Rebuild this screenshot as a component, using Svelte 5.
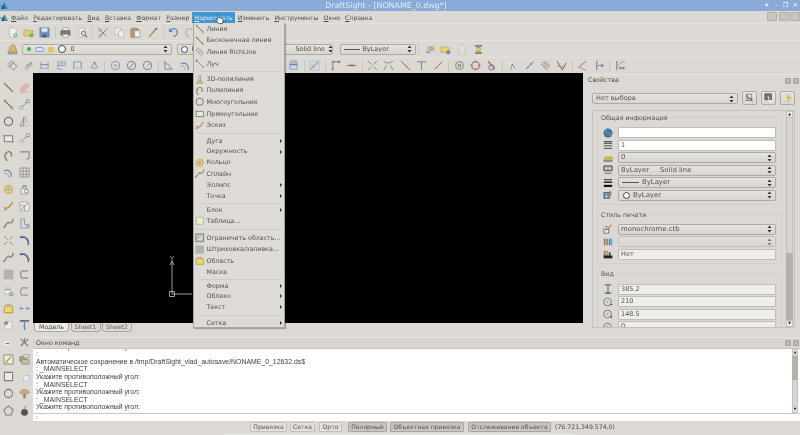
<script>
  const P = (d, s = '#555', w = 1, f = 'none') => ({ d, s, w, f });
  const C = (x, y, r) => `M${x - r} ${y}a${r} ${r} 0 1 0 ${2 * r} 0a${r} ${r} 0 1 0 ${-2 * r} 0`;
  const tan = '#a88a35', blue = '#3f78c8', dk = '#4a4a4a', gy = '#8a8a8a', yel = '#e8c84a', red = '#d9536a', grn = '#4fb04f';
  const dots = (...a) => a.map(([x, y, c]) => P(C(x, y, 1), c || tan, 0.6, c || tan));

  const I = {
    line: [P('M2 2L10 10', dk, 1.2), ...dots([2, 2], [10, 10])],
    xline: [P('M1 1L11 11', dk, 1.2), ...dots([3, 3], [9, 9])],
    rich: [P('M1 4L4 1L11 8L8 11Z', gy, 1, '#d5d2cc'), P('M3 5L7 9M5 3L9 7', gy, 0.6)],
    ray: [P('M2 2L10 10', '#6a6f9a', 1), ...dots([2, 2, blue], [10, 10])],
    p3d: [P('M2 10H10V12H2Z', tan, 0.6, '#c5b26a'), P('M5 1V9M7 1V9', gy, 1), P('M3 8H9', gy, 1)],
    pline: [P('M4 11C0 7 3 1 7 2C10 3 10 5 9 6', dk, 1.2), ...dots([4, 11], [9, 6], [3, 4])],
    pgon: [P(C(6, 6, 4.6), '#555', 1.2)],
    rect: [P('M1.5 3H10.5V9.5H1.5Z', '#555', 1, '#eee'), ...dots([1.5, 3], [10.5, 9.5])],
    sketch: [P('M1 10C3 9 3 7 6 7L11 1', tan, 1.6), P('M1 6L4 10', red, 1)],
    ring: [P(C(6, 6, 4), '#d6b432', 2.2), P(C(6, 6, 1.2), '#555', 0.8)],
    spline: [P('M1 10C3 10 3 5 6 5S9 7 11 2', dk, 1.1), ...dots([1, 10], [6, 5], [11, 2])],
    table: [P('M1.5 1.5H10.5V10.5H1.5Z', '#7fa3d8', 1, '#f6f3b8')],
    bound: [P('M1 1H11V11H1Z', '#555', 1, '#bbb'), P('M4 8H8V4', '#fff', 1)],
    hatch: [P('M1 1H11V11H1Z', '#a5a5a8', 0.5, '#a9a9ac')],
    region: [P('M1.5 3.5H10.5V10.5H1.5Z', '#b89a2a', 1.2, '#f0d860'), P('M3 2H9', tan, 1)],
    nw: [P('M3 1H8L10 3V11H3Z', '#aaa', 0.8, '#fafafa'), P(C(9, 9, 2), grn, 0.5, grn), P('M8 9H10M9 8V10', '#fff', 0.7)],
    open: [P('M1 3H5L6 4H11V10H1Z', '#b3962e', 0.8, '#e2c766'), P(C(9, 9, 2), grn, 0.5, grn)],
    save: [P('M1 1H11V11H1Z', '#3768b0', 0.8, '#5286cf'), P('M3 1.5H9V5H3Z', '#fff', 0.3, '#e8eef8'), P('M4 8H8V11H4Z', '#222', 0.3, '#444')],
    print: [P('M3 1H9V4H3Z', '#777', 0.7, '#fff'), P('M1 4H11V9H1Z', '#444', 0.7, '#666'), P('M3 8H9V11H3Z', '#777', 0.7, '#fff')],
    prev: [P('M2 1H8V11H2Z', '#aaa', 0.8, '#f4f4f4'), P(C(7, 7, 2.4), '#555', 1, '#cfe0f0'), P('M9 9L11 11', '#555', 1.3)],
    cut: [P('M2 10L9 3M2 3L9 10', '#555', 0.9), P(C(2, 3, 1.3), tan, 1), P(C(2, 10, 1.3), tan, 1), P('M9 1L10 3', tan, 1)],
    copy: [P('M1 1H7V8H1Z', '#aaa', 0.8, '#f4f4f4'), P('M5 4H11V11H5Z', '#aaa', 0.8, '#f4f4f4')],
    paste: [P('M1 2H9V11H1Z', '#8a6a30', 0.8, '#b58a45'), P('M5 4H11V11H5Z', '#888', 0.8, '#f7f7f7'), P('M3 1H7V3H3Z', '#666', 0.5, '#aaa')],
    brush: [P('M2 11L9 3', '#9a7a30', 1.4), P('M9 3L11 1', '#444', 1.6)],
    undo: [P('M3 3C7 0 11 3 10 7C9.5 9 8 10 6 10.5', '#3a74c8', 1.4), P('M1 1V5.5H5.5Z', '#3a74c8', 0, '#3a74c8')],
    redo: [P('M9 3C5 0 1 3 2 7C2.5 9 4 10 6 10.5', '#aaa', 1.3)],
    layer: [P('M1 9L3 5H10L11 9Z', '#a88a35', 0.7, '#cfae50'), P('M3 6V3L5 1H8L9 3V6', '#777', 0.7, '#d9b066'), P('M1 9H11V11H1Z', '#777', 0.5, '#999')],
    lay2: [P('M2 9H7', blue, 1.2), P('M4 3H11V7H4Z', '#b3962e', 0.7, '#e2c766'), P(C(8, 5, 1.3), blue, 0.8)],
    lay3: [P('M1 3H5L6 4H10V9H1Z', '#b3962e', 0.8, '#f2d640'), P(C(9, 9, 2), blue, 0.5, blue)],
    doc: [P('M3 1H8L10 3V11H3Z', '#bbb', 0.8, '#e4e1dc')],
    lay4: [P('M2 2H10M2 10H10M4 2L8 10M8 2L4 10', '#333', 1), P('M4 4H8V8H4Z', tan, 0.6, yel)],
    d1: [P('M1 5L5 1L11 7L7 11Z', '#4a70c0', 1), P('M2 8L8 2', tan, 1.4)],
    d2: [P('M2 10L10 2', blue, 1), P('M4 11L11 4', gy, 1), ...dots([5, 6], [8, 4])],
    d3: [P('M2 2V10M10 2V10', gy, 1), P('M2 5H10', blue, 1), P('M2 9H10', blue, 0.6)],
    d4: [P('M2 2H10V6H2Z', blue, 0.8), P('M2 6V10H7', blue, 0.8), P('M4 4H8', tan, 0.8)],
    d5: [P('M2 2V10M10 2V10', blue, 1), P('M2 2H10', blue, 0.8), P('M4 9H8', tan, 0.8)],
    d6: [P('M2 9L6 3L10 9', gy, 1.1), P('M4 9H8', blue, 0.8), ...dots([6, 3])],
    d7: [P(C(6, 6, 4.4), blue, 0.9), P(C(6, 6, 1), tan, 1)],
    d8: [P(C(6, 6, 4.4), '#555', 0.9), P('M3 9L9 3', blue, 1)],
    d9: [P(C(6, 6, 4.4), '#555', 0.9), P('M6 6L9.5 3', blue, 1)],
    d10: [P('M2 1V10H11', blue, 1), P('M2 4C6 4 8 6 8 10', '#777', 1)],
    d11: [P('M1 4C6 2 10 6 9 11', blue, 1.2), P('M1 7C4 6 6 8 6 11', tan, 1)],
    d12: [P('M2 3H10V10H2Z', blue, 0.8), P('M2 1H10', '#777', 0.8), P('M2 5H10', blue, 1.5)],
    d13: [P('M1 1H11V11H1Z', '#8fb2e0', 0.8, '#cfe0f4'), P('M2 10L10 2', tan, 1.3), P('M3 5L7 9', red, 0.8)],
    m1: [P('M3 1V11', '#555', 1), P('M3 2H10', '#555', 1), ...dots([3, 2, red], [10, 2, '#555'], [3, 10, red])],
    m2: [P('M1 6H11', '#555', 1), P('M4 5H8V7H4Z', red, 0.6)],
    m3: [P('M1 1L5 5M7 7L11 11M11 1L7 5M5 7L1 11', '#666', 0.9)],
    m4: [P('M1 1C3 4 8 4 11 1M1 11L4 6M11 11L8 6', '#666', 0.9)],
    m5: [P('M1 1L11 11', '#555', 1), P('M5 5L8 8', red, 1.4)],
    m6: [P('M6 2V11M1 2H11', '#666', 1), P('M6 7V9', red, 1)],
    m7: [P('M2 10L10 2', '#555', 1), P('M3 9L5 7', red, 1.2)],
    m8: [P(C(6, 6, 4.3), '#666', 1), P(C(6, 6, 1.4), '#444', 1)],
    m9: [P(C(6, 6, 4.3), '#555', 1), ...dots([6, 1.7, red], [1.7, 6, red], [10.3, 6, red], [6, 10.3, red])],
    m10: [P(C(6, 8, 3), '#555', 1), P('M2 1L9 10', '#444', 1), ...dots([4, 3, red])],
    m11: [P('M2 2H9V11H2Z', '#ccc', 0.6, '#eee'), P('M4 9L6 4L8 9', '#444', 0.9), P('M3 10H6', red, 0.8)],
    m12: [P('M2 10L10 2', '#555', 1), P('M4 8L5 7', red, 1.8), P('M7 5L8 4', blue, 1.8)],
    m13: [P('M1 4L8 11M3 2L10 9M5 1L11 7', gy, 1.1), P('M4 6L6 8', red, 0.8)],
    m14: [P('M1 1L7 11L11 3', '#444', 1), P('M1 7L9 7', red, 0.8)],
    m15: [P('M2 8L10 1', '#666', 1), P('M2 8L10 11', red, 0.9)],
    m16: [P('M3 1V11', '#555', 1), P('M3 6H10', red, 1), P('M8 4L11 6L8 8Z', blue, 0.4, blue)],
    m17: [P('M2 1V11', '#555', 1), P('M4 5L8 2H11M4 8H11', tan, 1), ...dots([6, 9, red], [9, 9, blue])],
    er: [P('M1 8L6 2H10L11 4L6 10H3Z', '#c9a0a0', 0.7, '#e6a9a9'), P('M1 11H11', '#999', 0.8)],
    cp: [P('M2 10L9 3', blue, 1), P('M1 8H4V11H1Z', '#777', 0.8, '#fff'), P('M8 1H11V4H8Z', '#555', 0.8, '#fff')],
    tri: [P('M6 1L1 11H5V1', '#777', 0.9), P('M7 1V11H11Z', '#aaa', 0.9, '#eee')],
    cp2: [P('M2 10L9 3', blue, 0.9), P('M1 7H5V11H1Z', '#bbb', 0.8), P('M8 1H11V4H8Z', '#555', 0.8, '#fff')],
    fil: [P('M1 2H11V7C11 9 10 10 8 10', '#777', 1.2)],
    arr: [P('M1 1H11V11H1ZM1 4.5H11M1 8H11M4.5 1V11M8 1V11', '#777', 0.8)],
    rot: [P('M2 5H9V11H2Z', '#888', 0.8, '#eee'), P('M4 4C4 1 8 1 8 4', blue, 1.2), P(C(8, 8, 2), '#555', 0.8, '#fff')],
    sc: [P('M1 1H11V11H1Z', '#999', 0.8, '#eee'), P('M2 10L10 2', blue, 1), P('M1 5H6V11', '#888', 0.8)],
    st: [P('M2 1V11H11V7H6V1Z', '#777', 0.8, '#cbd6e4'), P('M8 9H11', blue, 1)],
    ex: [P('M1 3C6 1 11 5 10 11', '#222', 1.2), P('M1 2C6 0 11 4 11 9', blue, 1.1)],
    off: [P('M10 2H4C1 2 1 10 4 10H10', '#777', 1.3), P('M7 4H5C3 4 3 8 5 8H7', '#ccc', 0.8)],
    off2: [P('M10 2H4C1 2 1 10 4 10H10', '#888', 1.2)],
    attr: [P('M2 2H8V9H2Z', '#aaa', 0.8, '#eee'), P('M3 4H7', '#555', 1), P(C(9, 9, 2.2), grn, 0.4, grn), P('M8 9H10M9 8V10', '#fff', 0.7)],
    mv: [P('M1 6H5M7 6H11', blue, 1.2), P('M3 4L1 6L3 8M9 4L11 6L9 8', blue, 0.8)],
    blk: [P('M2 2H10V10H2Z', '#aaa', 0.8, '#f2f2f2'), P('M2 2H5V5H2Z', '#444', 0.3, '#777')],
    dim: [P('M1 1H11', '#222', 1.4), P('M6 1V11', blue, 1.6)],
    blk2: [P('M1 5H8V9H1Z', '#ddd', 0.8, '#fafafa'), P('M3 7H7', '#444', 1)],
    trim: [P('M2 2L10 10M10 2L2 10', '#555', 1.1), P('M6 1V6', blue, 1.2), P('M2 9L5 6', tan, 1.4)],
    edit: [P('M1 1H11V11H1Z', '#555', 0.8, '#f2f2d8'), P('M3 9L9 3', tan, 1.4), P('M3 9L5 9', red, 1)],
    stack: [P('M1 3H7V8H1Z', '#555', 0.8, '#b89c66'), P('M3 6H11V11H3Z', '#777', 0.8, '#cbb78d'), P('M5 1H11V4H5Z', '#777', 0.8, '#eee')],
    sq: [P('M1.5 1.5H10.5V10.5H1.5Z', '#666', 1.1, '#eee')],
    note: [P('M2 2H8V8H2Z', '#bbb', 0.6, '#f6f3b8'), P('M5 5H11V11H5Z', '#88aadd', 0.6, '#e6effa')],
    hex: [P(C(6, 6, 4.5), '#666', 1.1)],
    tree: [P('M1 5C1 1 11 1 11 5C11 7 1 7 1 5Z', '#8a6a30', 0.8, '#d2a766'), P('M5 7H7V11H5Z', '#8a6a30', 0.6, '#8a6a30')],
    star: [P('M6 1L11 5L9 11H3L1 5Z', '#666', 1.1)],
    bomb: [P(C(6, 8, 3.5), '#222', 0.5, '#333'), P('M6 4V2L9 1', tan, 1)],
    globe: [P(C(6, 6, 5), '#2e5f90', 0.7, '#3b7bb6'), P('M3 3C5 2 6 5 3 6M7 6L10 8L8 10Z', grn, 0.5, '#58b058'), P('M2 10H10', '#555', 1)],
    bars: [P('M1 2H11M1 4H11', '#222', 1), P('M1 7H11M1 10H11', '#333', 1, 'none')],
    fold: [P('M1 9L3 5H11V9Z', '#a88a35', 0.7, '#cfb750'), P('M1 9H11V10.5H1Z', '#777', 0.3, '#908760')],
    pat: [P('M1 1H11V7H1Z', '#444', 0.8, '#888'), P('M3 3H5V5H3ZM7 3H9V5H7Z', '#fff', 0.4, '#fff'), P('M2 10H10', '#555', 1)],
    thick: [P('M1 2H11', '#111', 1), P('M1 5H11', '#111', 1.6), P('M1 9.5H11', '#111', 2.6)],
    col: [P('M1 3H8V10H1Z', '#444', 0.8, '#7f90b0'), P('M8 1L10 4L7 9', tan, 1.4), P(C(4, 8, 1.3), blue, 0.6, '#fff')],
    pst: [P('M1 6H7V11H1Z', '#333', 0.8, '#fff'), P('M3 9L10 1', tan, 1.3), P('M2 3H6', red, 1)],
    bars3: [P('M2 2V10', red, 2), P('M5 2V10', grn, 2), P('M8 2V10', blue, 2), P('M10.5 2V10', blue, 1)],
    bars4: [P('M2 2V10', red, 2), P('M5 2V10', grn, 1.5), P('M1 8H11V11H1Z', '#222', 0.4, '#222'), P('M8 4V8', '#333', 2)],
    h: [P('M2 1H10M2 11H10M6 1V11', '#2e5f90', 1.1), P('M3 11H9', '#2e5f90', 1)],
    cx: [P(C(5.5, 6, 4.6), '#666', 0.9), P(C(5.5, 6, 0.8), tan, 0.8), P('M9 9H11', '#333', 1)],
    cy: [P(C(5.5, 6, 4.6), '#666', 0.9), P(C(5.5, 6, 0.8), tan, 0.8), P('M10 8V11', '#333', 1)],
    sel1: [P('M1.5 1.5H8V9H1.5Z', '#555', 0.8, 'none'), P('M3 3L4 7L6 6L9 10', '#333', 1)],
    sel2: [P('M1 1H9V8H1Z', '#444', 0.8, '#777'), P('M5 4L7 11L8.5 9L11 11', '#fff', 1)],
    sel3: [P('M1 1H10V10H1Z', '#ccc', 0.6), P('M7 1L4 6H7L5 11L10 5H7Z', '#b89a2a', 0.4, '#e6c530')]
  };

  const tb1 = ['nw', 'open', 'save', '|', 'print', 'prev', '|', 'cut', 'copy', 'paste', 'brush', '|', 'undo', 'redo'];
  const tb3a = ['d1', 'd2', 'd3', 'd4', 'd5', 'd6', '|', 'd7', 'd8', 'd9', '|', 'd10', 'd11'];
  const tb3b = ['d12', '|', 'd13', '|', 'm1', 'm2', '|', 'm3', 'm4', 'm5', 'm6', 'm7', '|', 'm8', 'm9', 'm10', '|', 'm11', 'm12', 'm13', 'm14', '|', 'm15', 'm16', '|', 'm17'];
  const left = ['line', 'er', 'xline', 'cp', 'pgon', 'tri', 'rect', 'cp2', 'pline', 'fil', 'd11', 'arr', 'ring', 'rot', 'sketch', 'sc', 'spline', 'st', 'm3', 'ex',
    'spline', 'ex', 'hatch', 'off', 'attr', 'off2', 'region', 'mv', 'blk', 'dim', 'blk2', 'trim', 'edit', 'stack', 'sq', 'note', 'hex', 'tree', 'star', 'bomb'];

  const menu = [
    ['Линия', 'line'], ['Бесконечная линия', 'xline'], ['Линия RichLine', 'rich'], ['Луч', 'ray'], 3.6,
    ['3D-полилиния', 'p3d'], ['Полилиния', 'pline'], ['Многоугольник', 'pgon'], ['Прямоугольник', 'rect'], ['Эскиз', 'sketch'], 4.5,
    ['Дуга', '', 1], ['Окружность', '', 1], ['Кольцо', 'ring'], ['Сплайн', 'spline'], ['Эллипс', '', 1], ['Точка', '', 1], 3.4,
    ['Блок', '', 1], ['Таблица...', 'table'], 5.3,
    ['Ограничить область...', 'bound'], ['Штриховка/заливка...', 'hatch'], ['Область', 'region'], ['Маска', ''], 3,
    ['Форма', '', 1], ['Облако', '', 1], ['Текст', '', 1], 5.2,
    ['Сетка', '', 1]
  ];
  const menus = ['Файл', 'Редактировать', 'Вид', 'Вставка', 'Формат', 'Размер', 'Нарисовать', 'Изменить', 'Инструменты', 'Окно', 'Справка'];
  const log = ['Укажите противоположный угол:', ':', 'Автоматическое сохранение в /tmp/DraftSight_vlad_autosave/NONAME_0_12632.ds$', ': _MAINSELECT', 'Укажите противоположный угол:', ': _MAINSELECT', 'Укажите противоположный угол:', ': _MAINSELECT', 'Укажите противоположный угол:'];
</script>

{#snippet ic(n)}
  <svg class="ic" viewBox="0 0 12 12">
    {#each I[n] ?? [] as p}<path d={p.d} stroke={p.s} stroke-width={p.w} fill={p.f} />{/each}
  </svg>
{/snippet}

{#snippet spin()}
  <svg class="spin" viewBox="0 0 5 8"><path d="M2.5 0.5L4.5 3H0.5ZM2.5 7.5L4.5 5H0.5Z" fill="#333" /></svg>
{/snippet}

{#snippet tools(list)}
  {#each list as t}
    {#if t === '|'}<span class="sep"></span>{:else}<span class="tool">{@render ic(t)}</span>{/if}
  {/each}
{/snippet}

{#snippet winbtns()}
  <span class="dockbtns"><i></i><i></i></span>
{/snippet}

<div class="app">
  <header class="title">
    <svg class="logo" viewBox="0 0 8 8"><path d="M1 7L4 1V7Z" fill="#1c3fb0" /><path d="M4 1L7 7H4Z" fill="#20a0a0" /><path d="M0 4H3V5H0Z" fill="#3a9a3a" /></svg>
    <span class="ttext">DraftSight - [NONAME_0.dwg*]</span>
    <span class="wm"><b>✦</b><b>–</b><b>❐</b><b>✕</b></span>
  </header>

  <nav class="menubar">
    <svg class="logo" viewBox="0 0 8 8"><path d="M1 7L4 1V7Z" fill="#1c3fb0" /><path d="M4 1L7 7H4Z" fill="#20a0a0" /><path d="M0 4H3V5H0Z" fill="#3a9a3a" /></svg>
    {#each menus as m, i}
      <span class="mi" class:on={i === 6}><u>{m[0]}</u>{m.slice(1)}</span>
    {/each}
    <span class="mdi"><i></i><i></i><i></i></span>
  </nav>

  <div class="bar b1">{@render tools(tb1)}</div>

  <div class="bar b2">
    <span class="tool">{@render ic('layer')}</span>
    <div class="combo c1">
      <span class="dot"></span><span class="pill"></span><span class="lock"></span><span class="ring"></span>
      <span class="ctext">0</span>{@render spin()}
    </div>
    <div class="combo c2"><span class="ring small"></span><span class="ctext">ByLayer</span></div>
    <div class="combo c3"><span class="ctext">Solid line</span>{@render spin()}</div>
    <div class="combo c4"><span class="ln"></span><span class="ctext">ByLayer</span>{@render spin()}</div>
    <span class="sep"></span>
    <span class="tool">{@render ic('lay2')}</span>
    <span class="tool">{@render ic('lay3')}</span>
    <span class="tool">{@render ic('doc')}</span>
    <span class="tool">{@render ic('lay4')}</span>
  </div>

  <div class="bar b3">
    {@render tools(tb3a)}
    <span class="hidden-gap"></span>
    {@render tools(tb3b)}
  </div>

  <div class="main">
    <aside class="side">
      {#each left as t}<span class="tool">{@render ic(t)}</span>{/each}
    </aside>

    <div class="work">
      <div class="top">
        <div class="center">
          <div class="canvas">
            <svg class="axes" viewBox="0 0 40 50">
              <path d="M20 6V38H40M18 9L20 5L22 9M17.5 35.5H22.5V40.5H17.5Z" stroke="#c4c4c4" fill="none" stroke-width="0.8" />
              <path d="M18 0L20 2.5L22 0M20 2.5V5" stroke="#c4c4c4" fill="none" stroke-width="0.7" />
            </svg>
          </div>
          <div class="tabs">
            <span class="tab act">Модель</span><span class="tab">Sheet1</span><span class="tab">Sheet2</span>
          </div>
        </div>

        <section class="props">
          <div class="dockt"><span>Свойства</span>{@render winbtns()}</div>
          <div class="selrow">
            <div class="combo sel"><span class="ctext">Нет выбора</span>{@render spin()}</div>
            <span class="sb">{@render ic('sel1')}</span><span class="sb">{@render ic('sel2')}</span><span class="sb">{@render ic('sel3')}</span>
          </div>
          <div class="frame">
            <div class="scrollcontent">
              <fieldset>
                <legend>Общая информация</legend>
                <div class="row"><span class="ri">{@render ic('globe')}</span><div class="field white"></div></div>
                <div class="row"><span class="ri">{@render ic('bars')}</span><div class="field white">1</div></div>
                <div class="row"><span class="ri">{@render ic('fold')}</span><div class="combo f"><span class="ctext">0</span>{@render spin()}</div></div>
                <div class="row"><span class="ri">{@render ic('pat')}</span><div class="combo f"><span class="ctext">ByLayer &nbsp; &nbsp; Solid line</span>{@render spin()}</div></div>
                <div class="row"><span class="ri">{@render ic('thick')}</span><div class="combo f"><span class="ln sm"></span><span class="ctext">ByLayer</span>{@render spin()}</div></div>
                <div class="row"><span class="ri">{@render ic('col')}</span><div class="combo f"><span class="ring small"></span><span class="ctext">ByLayer</span>{@render spin()}</div></div>
              </fieldset>
              <fieldset>
                <legend>Стиль печати</legend>
                <div class="row"><span class="ri">{@render ic('pst')}</span><div class="combo f"><span class="ctext">monochrome.ctb</span>{@render spin()}</div></div>
                <div class="row"><span class="ri">{@render ic('bars3')}</span><div class="combo f dis"><span class="ctext"></span>{@render spin()}</div></div>
                <div class="row"><span class="ri">{@render ic('bars4')}</span><div class="field">Нет</div></div>
              </fieldset>
              <fieldset>
                <legend>Вид</legend>
                <div class="row"><span class="ri">{@render ic('h')}</span><div class="field">385.2</div></div>
                <div class="row"><span class="ri">{@render ic('cx')}</span><div class="field">210</div></div>
                <div class="row"><span class="ri">{@render ic('cy')}</span><div class="field">148.5</div></div>
                <div class="row"><span class="ri">{@render ic('cx')}</span><div class="field">0</div></div>
              </fieldset>
            </div>
            <div class="vbar">
              <span class="arrow">▲</span><span class="thumb"></span><span class="trough"></span><span class="arrow">▼</span>
            </div>
          </div>
        </section>
      </div>

      <section class="cmd">
        <div class="dockt ct"><span>Окно команд</span>{@render winbtns()}</div>
        <div class="out">
          <div class="log">
            {#each log as l}<div>{l}</div>{/each}
          </div>
          <div class="vbar small">
            <span class="arrow">▲</span><span class="trough"></span><span class="thumb"></span><span class="arrow">▼</span>
          </div>
        </div>
        <div class="input">:</div>
      </section>
    </div>
  </div>

  <footer class="status">
    <span class="st s1">Привязка</span>
    <span class="st s2">Сетка</span>
    <span class="st s3">Орто</span>
    <span class="st s4 pr">Полярный</span>
    <span class="st s5 pr">Объектная привязка</span>
    <span class="st s6 pr">Отслеживание объекта</span>
    <span class="coords">(76.721,349.574,0)</span>
    <span class="strip"></span>
  </footer>

  <div class="menu">
    {#each menu as m}
      {#if typeof m === 'number'}
        <div class="msep" style:height="{m}px"></div>
      {:else}
        <div class="item" class:tall={m[1]}>
          <span class="mic">{#if m[1]}{@render ic(m[1])}{/if}</span>
          <span class="lbl">{m[0]}</span>
          {#if m[2]}<span class="sub"></span>{/if}
        </div>
      {/if}
    {/each}
  </div>

  <svg class="cursor" viewBox="0 0 10 13">
    <path d="M3 1.2C3 .3 4.4 .3 4.4 1.2V5L7.6 6C8.6 6.3 9 6.8 8.8 8L8.3 11.6H3.8L1 7.4C.6 6.6 1.6 6 2.2 6.8L3 7.8Z" fill="#fff" stroke="#222" stroke-width="0.7" />
  </svg>
</div>

<style>
  :global(body) { margin: 0; background: #dcd8d3; }
  .app {
    position: relative; width: 800px; height: 435px; overflow: hidden;
    display: flex; flex-direction: column;
    background: #dcd8d3; color: #4d4b48;
    font: 6.3px/1 "DejaVu Sans", sans-serif;
    filter: blur(0.3px);
  }
  .ic { display: block; width: 11px; height: 11px; opacity: .8; }
  .title {
    height: 11px; flex: none; background: #8aaad8; position: relative;
    display: flex; align-items: center; justify-content: center;
  }
  .title .logo { position: absolute; left: 0; top: 1px; }
  .logo { width: 9px; height: 9px; flex: none; }
  .ttext { color: #e4ebf6; font-size: 7.9px; transform: translateX(-14px); }
  .wm { position: absolute; right: 0; top: 2px; display: flex; color: #fff; font-size: 6px; }
  .wm b { width: 9.5px; text-align: center; font-weight: 400; }

  .menubar { height: 12px; flex: none; position: relative; display: flex; align-items: center; }
  .menubar .logo { margin-right: -1px; }
  .mi { padding: 0 2.6px; height: 11.5px; line-height: 11.5px; margin-top: .5px; white-space: nowrap; font-size: 6.15px; }
  .mi:first-of-type { padding-left: 3px; }
  .mi u { text-decoration-thickness: 0.5px; text-underline-offset: 1px; }
  .mi.on { background: #3f97d4; color: #e8f2fb; }
  .mdi { position: absolute; right: 0; top: 1px; display: flex; gap: 1.5px; }
  .mdi i { width: 8px; height: 7px; border: 1px solid #b2aea8; background: #c9c5bf; border-radius: 1px; }

  .bar { flex: none; display: flex; align-items: center; padding-left: 4px; border-top: 1px solid #e4e1dd; }
  .b1 { height: 16px; }
  .b2 { height: 16px; }
  .b3 { height: 15px; }
  .tool { width: 16.4px; height: 16px; display: flex; align-items: center; justify-content: center; flex: none; }
  .sep { width: 4.5px; height: 12px; flex: none; position: relative; }
  .sep::after { content: ""; position: absolute; left: 2px; top: 0; bottom: 0; width: 1px; background: #c9c5bf; }
  .hidden-gap { width: 92px; flex: none; }

  .combo {
    display: flex; align-items: center; height: 11px; box-sizing: border-box; flex: none;
    border: 1px solid #aeaaa4; border-radius: 2px; background: linear-gradient(#e6e3df, #d8d4cf);
    padding: 0 3px; gap: 3px; color: #55524e; font-size: 6.5px;
  }
  .ctext { flex: 1; white-space: nowrap; overflow: hidden; }
  .spin { width: 5px; height: 8px; flex: none; }
  .c1 { width: 150px; margin-left: 2px; gap: 4px; padding-left: 4px; }
  .c2 { width: 55px; margin-left: 5px; }
  .c3 { width: 98px; margin-left: 3px; }
  .c3 .ctext { padding-left: 56px; overflow: visible; }
  .c4 { width: 76px; margin-left: 7px; gap: 2px; }
  .dot { width: 4px; height: 4px; border-radius: 50%; background: #32b84a; flex: none; }
  .pill { width: 7px; height: 3px; border-radius: 2px; border: 1px solid #7fa7d4; background: #d6e4f3; flex: none; }
  .lock { width: 6px; height: 5px; background: #e0c65a; border-radius: 1px; flex: none; }
  .ring { width: 6px; height: 6px; border-radius: 50%; border: 1px solid #444; background: #fff; flex: none; }
  .ring.small { width: 5px; height: 5px; }
  .ln { width: 16px; height: 1px; background: #555; flex: none; }
  .ln.sm { width: 17px; margin-left: 1px; }

  .main { flex: 1; min-height: 0; display: flex; }
  .side {
    width: 33px; flex: none; box-sizing: border-box; padding-top: 5.5px;
    display: grid; grid-template-columns: 16.5px 16.5px; grid-auto-rows: 17px;
    justify-items: center; align-items: center;
  }
  .work { flex: 1; min-width: 0; display: flex; flex-direction: column; }
  .top { flex: none; height: 263px; display: flex; }
  .center { width: 550px; flex: none; display: flex; flex-direction: column; }
  .canvas { height: 250px; background: #000; position: relative; flex: none; }
  .axes { position: absolute; left: 119px; top: 183px; width: 40px; height: 50px; }
  .tabs { display: flex; padding-left: 1px; gap: 1.5px; height: 9px; }
  .tab {
    width: 30px; height: 9px; box-sizing: border-box; text-align: center; line-height: 7.5px;
    border: 1px solid #a8a49e; border-top: 0; border-radius: 0 0 4px 4px; color: #66635f; font-size: 6.2px;
  }
  .tab.act { width: 35px; background: #ecebe7; line-height: 8.5px; color: #444; }

  .props { flex: 1; margin-left: 2px; margin-top: 1px; display: flex; flex-direction: column; min-width: 0; border-top: 1px solid #e6e3df; }
  .dockt { height: 11px; display: flex; align-items: center; justify-content: space-between; padding-left: 3px; flex: none; }
  .dockbtns { display: flex; gap: 2px; padding-right: 1px; }
  .dockbtns i { width: 6px; height: 6px; border-radius: 1px; border: 1px solid #a4a09a; background: #bdb9b3; box-sizing: border-box; }
  .selrow { display: flex; align-items: center; margin: 6px 0 0 7px; gap: 4px; }
  .sel { width: 146px; }
  .sb {
    width: 15px; height: 14px; box-sizing: border-box; border: 1px solid #aeaaa4; border-radius: 2px;
    background: linear-gradient(#ebe8e4, #dad6d1); display: flex; align-items: center; justify-content: center; margin-top: -1px;
  }
  .sb .ic, .ri .ic { width: 10px; height: 10px; opacity: 1; }
  .frame {
    margin: 5px 5px 0 7px; height: 218px; box-sizing: border-box; border: 1px solid #c5c1bb;
    display: flex; overflow: hidden; flex: none;
  }
  .scrollcontent { flex: 1; min-width: 0; padding: 3px 3px 0 4px; display: flex; flex-direction: column; }
  fieldset {
    margin: 0 0 6px; padding: 6px 5px 3px 0; border: 1px solid #d2cec8; border-radius: 1px;
    display: flex; flex-direction: column; gap: 1.5px; min-width: 0;
  }
  fieldset:last-child { padding-top: 7px; }
  legend { padding: 0 3px; margin-left: 0; font-size: 6.3px; color: #55524e; line-height: 7px; }
  .row { display: flex; align-items: center; height: 11px; flex: none; }
  .ri { width: 20px; flex: none; display: flex; justify-content: center; }
  .field {
    flex: 1; height: 11px; box-sizing: border-box; border: 1px solid #c0bcb6; border-radius: 1px;
    background: #efede9; padding-left: 2px; line-height: 9px; color: #55524e; font-size: 6.5px;
  }
  .field.white { background: #fff; }
  .f { flex: 1; min-width: 0; padding-left: 2px; font-size: 6.9px; }
  .f.dis { opacity: .55; }
  .f .ring.small { margin-left: 2px; }
  .vbar { width: 7px; flex: none; margin: 0 1px; display: flex; flex-direction: column; }
  .arrow { height: 7px; flex: none; background: #ece9e5; border: 1px solid #c5c1bb; box-sizing: border-box; font-size: 3.5px; line-height: 5px; text-align: center; color: #222; }
  .thumb { height: 135px; flex: none; background: #d8d5d0; border: solid #c5c1bb; border-width: 0 1px; box-sizing: border-box; }
  .trough { flex: 1; background: #b5b1a9; }

  .cmd { flex: 1; min-height: 0; display: flex; flex-direction: column; margin-top: 1px; }
  .ct { height: 10px; border-top: 1px solid #e8e5e1; border-bottom: 1px solid #c8c4be; box-sizing: content-box; background: #d9d5d0; }
  .out { flex: none; height: 64px; background: #fff; display: flex; border-bottom: 1px solid #c9c5bf; }
  .log {
    flex: 1; min-width: 0; overflow: hidden; padding-left: 3px; padding-bottom: 2px; display: flex; flex-direction: column; justify-content: flex-end;
    font: 6.9px/7.6px "Liberation Sans", sans-serif; color: #3d3d3d;
  }
  .log div { flex: none; white-space: nowrap; }
  .out .vbar { width: 6px; margin: 0 2px 0 0; }
  .vbar.small .thumb { height: 26px; }
  .vbar.small .trough { flex: none; height: 24px; }
  .input { height: 7px; background: #fff; flex: none; padding-left: 3px; font-size: 6px; line-height: 6px; }

  .status { flex: none; height: 15px; box-sizing: border-box; position: relative; display: flex; align-items: center; padding: 0 0 1px 250px; }
  .st {
    height: 10px; box-sizing: border-box; border: 1px solid #c4c0ba; background: #e3e0dc; border-radius: 1px;
    text-align: center; line-height: 8px; color: #55524e; flex: none; white-space: nowrap; font-size: 6.1px;
  }
  .st.pr { background: #c9c5bf; border-color: #a9a59f; }
  .s1 { width: 37px; } .s2 { width: 25px; margin-left: 3px; } .s3 { width: 23px; margin-left: 4px; }
  .s4 { width: 39px; margin-left: 6px; } .s5 { width: 74px; margin-left: 3px; } .s6 { width: 83px; margin-left: 4px; }
  .coords { margin-left: 4px; font-size: 6.2px; }
  .strip { position: absolute; left: 224px; width: 351px; bottom: 0; height: 1px; background: #ebe9e6; }

  .menu {
    position: absolute; left: 193px; top: 23px; width: 92px; height: 305px; box-sizing: border-box;
    background: #dedbd6; border: 1px solid #a9a59f; border-top: 0; box-shadow: 1px 1px 1px rgba(0,0,0,.25);
    padding-top: 0.2px;
  }
  .item { height: 10.6px; display: flex; align-items: center; position: relative; white-space: nowrap; color: #55524e; }
  .item.tall { height: 11.6px; }
  .mic { width: 12px; flex: none; display: flex; justify-content: center; }
  .mic .ic { width: 9.5px; height: 9.5px; }
  .lbl { margin-left: 0.5px; }
  .sub { position: absolute; right: 2px; top: 50%; margin-top: -2px; border-left: 2.5px solid #333; border-top: 2px solid transparent; border-bottom: 2px solid transparent; }
  .msep { position: relative; flex: none; }
  .msep::after { content: ""; position: absolute; left: 3px; right: 3px; top: 45%; height: 1px; background: #cfcbc5; }
  .cursor { position: absolute; left: 215px; top: 13px; width: 9px; height: 12px; }
</style>
